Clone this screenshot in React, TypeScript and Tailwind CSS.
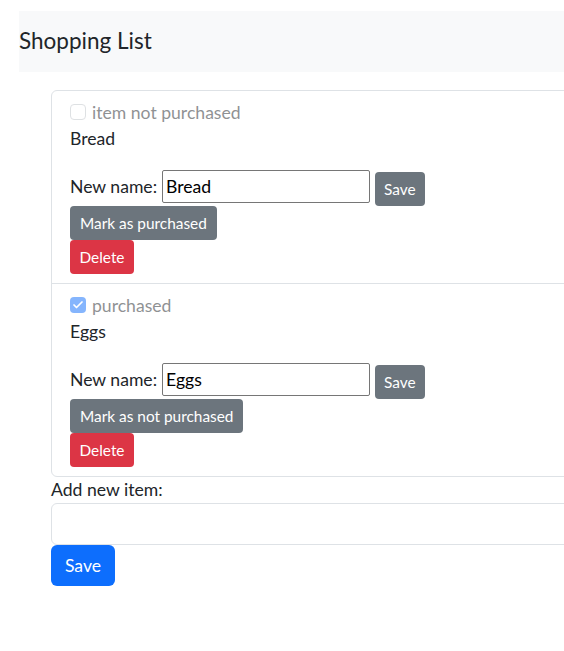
import { Check } from "lucide-react";

type Item = { name: string; purchased: boolean };

const items: Item[] = [
  { name: "Bread", purchased: false },
  { name: "Eggs", purchased: true },
];

function ItemRow({ item, last }: { item: Item; last: boolean }) {
  return (
    <li className={`px-[18px] pt-[8.8px] pb-[8.8px] ${last ? "" : "border-b border-[#dee2e6]"}`}>
      <div className="flex items-center h-[26.4px] opacity-50">
        {item.purchased ? (
          <span className="w-4 h-4 -mt-[1px] rounded-[4px] bg-[#0d6efd] flex items-center justify-center">
            <Check size={12} strokeWidth={3.5} color="#fff" />
          </span>
        ) : (
          <span className="w-4 h-4 -mt-[1px] rounded-[4px] border border-[#bfc4c9] bg-white" />
        )}
        <span className="ml-[6px] text-[#212529]">
          {item.purchased ? "purchased" : "item not purchased"}
        </span>
      </div>
      <p className="h-[26.4px] leading-[26.4px] mb-[17.6px]">{item.name}</p>
      <div className="flex items-start">
        <span className="h-[33px] leading-[33px]">New name:</span>
        <input
          type="text"
          defaultValue={item.name}
          className="ml-[5px] w-[208px] h-[33px] border border-[#767676] rounded-[2px] px-[3px] text-black outline-none"
        />
        <button className="ml-[5px] mt-[2px] h-[34px] px-[9px] rounded-[4px] bg-[#6c757d] text-white text-[15.4px]">
          Save
        </button>
      </div>
      <button className="block h-[34px] px-[10px] rounded-[4px] bg-[#6c757d] text-white text-[15.4px]">
        {item.purchased ? "Mark as not purchased" : "Mark as purchased"}
      </button>
      <button className="block h-[34px] w-[64px] rounded-[4px] bg-[#dc3545] text-white text-[15.4px]">
        Delete
      </button>
    </li>
  );
}

export default function App() {
  return (
    <div className="w-full min-h-screen overflow-hidden bg-white text-[#212529] text-[17.6px] leading-[26.4px] font-['Lato',sans-serif]">
      <header className="ml-[19px] mt-[11px] w-[600px] h-[61px] bg-[#f8f9fa] flex items-center">
        <span className="text-[22.5px]">Shopping List</span>
      </header>
      <div className="ml-[51px] mt-[18px] w-[600px]">
        <ul className="border border-[#dee2e6] rounded-[6px]">
          {items.map((it, i) => (
            <ItemRow key={it.name} item={it} last={i === items.length - 1} />
          ))}
        </ul>
        <label className="block h-[26.4px]">Add new item:</label>
        <input
          type="text"
          className="block w-full h-[42px] border border-[#dee2e6] rounded-[6px] outline-none px-3"
        />
        <button className="h-[41px] w-[64px] rounded-[6px] bg-[#0d6efd] text-white">
          Save
        </button>
      </div>
    </div>
  );
}
